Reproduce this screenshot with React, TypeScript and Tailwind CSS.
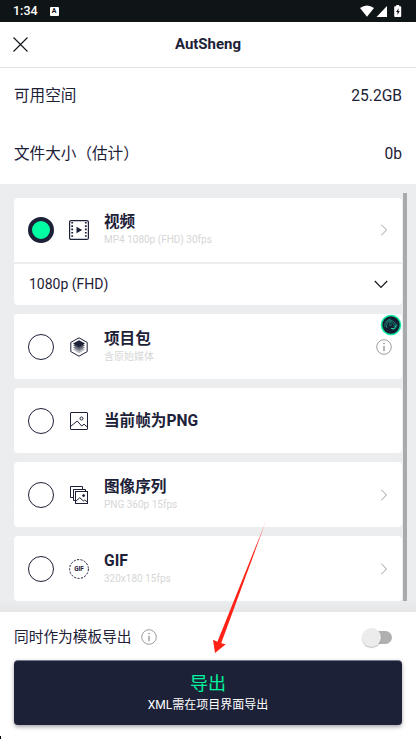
import React from 'react';

const options = [
  { title: '项目包', detail: '含原始媒体', icon: <PackageIcon />, action: 'info' },
  { title: '当前帧为PNG', detail: '', icon: <ImageIcon />, action: '' },
  { title: '图像序列', detail: 'PNG 360p 15fps', icon: <SequenceIcon />, action: 'more' },
  { title: 'GIF', detail: '320x180 15fps', icon: <GifIcon />, action: 'more' },
];

function FilmIcon() {
  return (
    <svg width="22" height="22" viewBox="0 0 22 22" fill="none" stroke="#1d2138">
      <rect x="1.6" y="1.6" width="18.8" height="18.8" rx="1.5" strokeWidth="1.2" />
      <path d="M4.2 3v16M17.8 3v16" strokeWidth="1.8" strokeDasharray="1.6 1.7" />
      <path d="M8.5 7.7v6.6l5.7-3.3z" fill="#1d2138" stroke="none" />
    </svg>
  );
}

function PackageIcon() {
  return (
    <svg width="22" height="22" viewBox="0 0 22 22" fill="none">
      <path d="M11 1.8l8.2 4.6v9.2L11 20.2l-8.2-4.6V6.4z" stroke="#1d2138" strokeWidth="1" />
      <path d="M11 10.5l6 3-6 3.7-6-3.7z" fill="#b5b6bf" />
      <path d="M11 8.5l6 3-6 3.3-6-3.3z" fill="#777a88" />
      <path d="M11 6.3l6 3-6 3.3-6-3.3z" fill="#454959" />
      <path d="M11 4.2l6 3.3-6 3.3-6-3.3z" fill="#1d2138" />
    </svg>
  );
}

function ImageIcon() {
  return (
    <svg width="22" height="22" viewBox="0 0 22 22" fill="none" stroke="#1d2138">
      <rect x="2.5" y="2.5" width="17" height="17" rx="0.5" />
      <circle cx="13.5" cy="8.5" r="1.5" />
      <path d="M2.5 16.5l6.7-5.5 4.5 5 2.3-1.8 3.5 3" />
    </svg>
  );
}

function SequenceIcon() {
  return (
    <svg width="22" height="22" viewBox="0 0 22 22" fill="none" stroke="#1d2138">
      <path d="M5 13.5H2.5v-11h12V5" />
      <path d="M7.5 16.5h-2v-11h12v2" />
      <rect x="7.5" y="7.5" width="12" height="12" />
      <circle cx="15.6" cy="11.6" r="1" fill="#1d2138" />
      <path d="M7.5 17.5l4.3-3.8 3.5 3.3 1.3-1 2.9 2" />
    </svg>
  );
}

function GifIcon() {
  return (
    <svg width="22" height="22" viewBox="0 0 22 22" fill="none">
      <circle cx="11" cy="11" r="9.4" stroke="#1d2138" strokeDasharray="2.2 1.3" />
      <text x="11" y="13.2" textAnchor="middle" fontSize="6.4" fontWeight="700" fill="#1d2138">
        GIF
      </text>
    </svg>
  );
}

function InfoIcon() {
  return (
    <svg className="shrink-0" width="16" height="16" viewBox="0 0 16 16" fill="none" stroke="#929292">
      <circle cx="8" cy="8" r="7.3" strokeWidth="0.9" />
      <path d="M8 6.7v5.5" strokeWidth="1.3" />
      <circle cx="8" cy="4.5" r="0.8" fill="#929292" stroke="none" />
    </svg>
  );
}

function MoreIcon() {
  return (
    <svg className="mr-1" width="8" height="12" viewBox="0 0 8 12" fill="none" stroke="#929292">
      <path d="M1.3.7L6.5 6l-5.2 5.3" strokeWidth="0.9" />
    </svg>
  );
}

function Radio({ checked = false }: { checked?: boolean }) {
  return checked ? (
    <span className="h-[26px] w-[26px] shrink-0 rounded-full border-4 border-[#1d2138] bg-[#00ffa3]" />
  ) : (
    <span className="h-[26px] w-[26px] shrink-0 rounded-full border-[1.5px] border-[#1d2138]" />
  );
}

function OptionLabel({ title, detail }: { title: string; detail: string }) {
  return (
    <div className="ml-3.5 flex-1">
      <div className="text-[15.6px] font-bold leading-5">{title}</div>
      {detail && <div className="text-[10px] leading-4 text-[#d6d6d6]">{detail}</div>}
    </div>
  );
}

function StatusBar() {
  return (
    <div className="flex h-[22px] items-center bg-[#0f1417] pl-[13px] pr-3.5 text-white">
      <span className="text-[12.5px] font-medium leading-[22px]">1:34</span>
      <span className="ml-3 flex h-[9px] w-[9px] items-center justify-center rounded-[1px] bg-white text-[7px] font-bold leading-none text-[#0f1417]">
        A
      </span>
      <svg className="ml-auto" width="42" height="14" viewBox="0 0 42 14" fill="#fff">
        <path d="M0 4.1Q7 -1 14 4.1L7 12.7z" />
        <path d="M27 2v10.9H16.5z" />
        <path d="M36.2 1h3v1.2h1.2q.8 0 .8.8v9.1q0 .9-.8.9H35q-.8 0-.8-.9V3q0-.8.8-.8h1.2z" />
        <path d="M38.5 4.3l-2.4 3.8h1.4v3l2.2-4h-1.3z" fill="#0f1417" />
      </svg>
    </div>
  );
}

export default function App() {
  return (
    <div className="relative flex h-[739px] w-[416px] flex-col overflow-hidden bg-white font-[Roboto,'Noto_Sans_CJK_SC',sans-serif] text-[#1d2138]">
      <StatusBar />

      {/* Header */}
      <header className="flex h-[46px] shrink-0 items-center border-b border-[#e2e2e2] px-3">
        <svg width="17" height="17" viewBox="0 0 17 17" fill="none" stroke="#111318">
          <path d="M1.5 1.5l14 14M15.5 1.5l-14 14" strokeWidth="1.1" />
        </svg>
        <h1 className="flex-1 pr-[17px] text-center text-[15px] font-bold">AutSheng</h1>
      </header>

      {/* Storage summary */}
      <div className="h-[116px] shrink-0 px-3.5 text-[15.6px]">
        <div className="flex h-[58px] items-center justify-between">
          <span>可用空间</span>
          <span>25.2GB</span>
        </div>
        <div className="flex h-[58px] items-center justify-between">
          <span>文件大小（估计）</span>
          <span>0b</span>
        </div>
      </div>

      {/* Export formats */}
      <main className="flex h-[428px] shrink-0 bg-[#ecedef] bg-linear-to-b from-[#ecedef] from-97% to-[#e5e6e8] pl-3.5 pt-[9px]">
        <div className="flex w-[388px] flex-col gap-[9px] pt-[5px]">
          <section className="h-[107px] shrink-0 rounded bg-white">
            <div className="flex h-16 items-center pl-3.5 pr-2.5">
              <Radio checked />
              <span className="ml-3.5">
                <FilmIcon />
              </span>
              <OptionLabel title="视频" detail="MP4 1080p (FHD) 30fps" />
              <MoreIcon />
            </div>
            <div className="flex h-[43px] items-center justify-between border-t-2 border-[#ededee] pl-[15px] pr-3.5 text-[14px]">
              <span>1080p (FHD)</span>
              <svg width="14" height="9" viewBox="0 0 14 9" fill="none" stroke="#15171c">
                <path d="M.8 1L7 7.4 13.2 1" strokeWidth="1.2" />
              </svg>
            </div>
          </section>

          {options.map((option) => (
            <section
              key={option.title}
              className="relative flex h-[65px] shrink-0 items-center rounded bg-white pl-3.5 pr-2.5"
            >
              <Radio />
              <span className="ml-3.5">{option.icon}</span>
              <OptionLabel title={option.title} detail={option.detail} />
              {option.action === 'more' && <MoreIcon />}
              {option.action === 'info' && (
                <>
                  <InfoIcon />
                  <svg className="absolute right-0 top-0" width="22" height="22" viewBox="0 0 22 22" fill="none">
                    <circle cx="11" cy="11" r="9.5" fill="#151d32" stroke="#12eca0" strokeWidth="1.6" />
                    <path
                      d="M5 13a6.5 6.5 0 0 1 6-8M7 14a5 5 0 0 1 5-7M6 8c4-3 10-1 10 4M9 9c4-1 6 1 5 4M9 11h3M12 15c3 1 5-2 5-5"
                      stroke="#168f78"
                      strokeWidth="0.9"
                    />
                    <path d="M11 14.5h3.5l1.5-3" stroke="#19cf98" />
                  </svg>
                </>
              )}
            </section>
          ))}
        </div>
        <div className="ml-px h-[408px] w-1 bg-[#a9aaac]" />
      </main>

      {/* Footer */}
      <footer className="flex-1 bg-white px-3.5">
        <div className="flex h-12 items-center pt-0.5">
          <span className="text-[14.7px]">同时作为模板导出</span>
          <span className="ml-[9px]">
            <InfoIcon />
          </span>
          <span className="ml-auto mr-2.5 flex h-[13px] w-[29px] items-center rounded-full bg-[#b0b0b0]">
            <span className="-ml-px h-[19px] w-[19px] shrink-0 rounded-full bg-[#ececec] shadow-[0_1px_1px_rgba(0,0,0,0.25)]" />
          </span>
        </div>
        <button className="flex h-[65px] w-full flex-col items-center justify-center rounded border-t border-[#777a88] bg-[#1d2138] shadow-[0_2px_4px_rgba(0,0,0,0.35)]">
          <span className="text-[18px] leading-6 text-[#00f59d]">导出</span>
          <span className="text-[12px] leading-[18px] text-white">XML需在项目界面导出</span>
        </button>
      </footer>

      {/* Pointer to the export button */}
      <svg className="absolute left-[210px] top-[516px]" width="60" height="140" viewBox="0 0 60 140">
        <defs>
          <linearGradient id="pointer" x1="0" y1="0" x2="0" y2="1">
            <stop offset="0" stopColor="#ff2215" stopOpacity="0.3" />
            <stop offset="0.2" stopColor="#ff2215" />
          </linearGradient>
        </defs>
        <path d="M56.7 3L9.2 125.5 3 123.5 5.5 137 15.8 128.3 12 127z" fill="none" />
        <path d="M56.8 3L7.4 125.7 3 123.7 5 137 15.8 128.2 11.2 127.2z" fill="url(#pointer)" />
      </svg>

      <span className="absolute bottom-0 left-0 h-[3px] w-px bg-black" />
    </div>
  );
}
